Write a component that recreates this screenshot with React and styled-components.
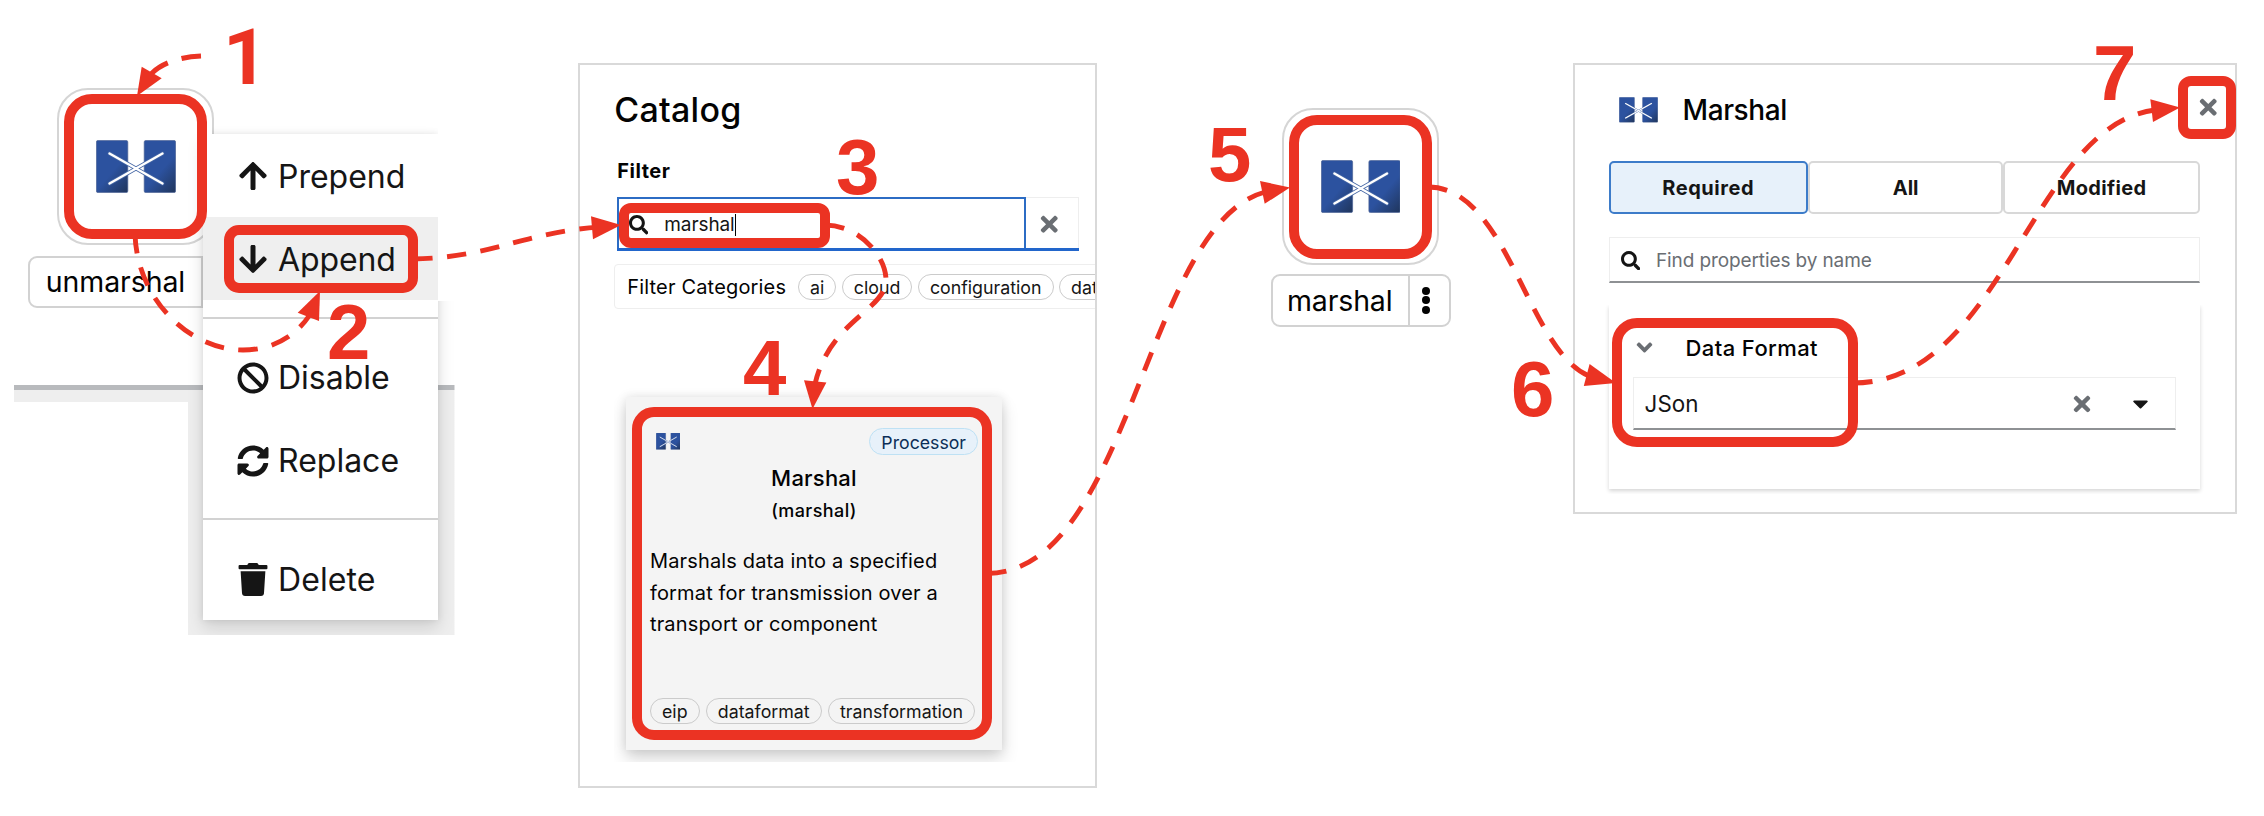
import React from 'react';
import styled, { createGlobalStyle } from 'styled-components';
import {
  FaArrowUp,
  FaArrowDown,
  FaBan,
  FaSyncAlt,
  FaTrash,
  FaTimes,
  FaSearch,
  FaCaretDown,
  FaAngleDown,
} from 'react-icons/fa';

const RED = '#eb3323';

const GlobalStyle = createGlobalStyle`
  * { box-sizing: border-box; }
  body {
    margin: 0;
    background: #fff;
    color: #030303;
    font-family: Inter, "Liberation Sans", sans-serif;
  }
`;

const Page = styled.main`
  position: relative;
  display: flex;
  align-items: flex-start;
  width: 2264px;
  height: 816px;
  overflow: hidden;
`;

/* ---------- Canvas with nodes ---------- */

const Canvas = styled.section`
  position: relative;
  flex: none;
  width: ${(p) => p.$width}px;
  height: 816px;
`;

const Floor = styled.div`
  position: absolute;
  left: 14px;
  top: 385px;
  width: 175px;
  height: 17px;
  background: linear-gradient(#b8babd 4.7px, #eee 4.7px);
`;

const NodeTile = styled.div`
  position: absolute;
  left: ${(p) => p.$x}px;
  top: ${(p) => p.$y}px;
  width: 156.5px;
  height: 157px;
  display: flex;
  align-items: center;
  justify-content: center;
  background: #fff;
  border: 2px solid #d5d5d5;
  border-radius: 31px;
`;

const NodeLabel = styled.div`
  position: absolute;
  left: ${(p) => p.$x}px;
  top: ${(p) => p.$y}px;
  display: flex;
  height: 52.5px;
  border: 2px solid #d2d2d2;
  border-radius: 9px;
  background: #fff;
`;

const NodeName = styled.span`
  display: flex;
  align-items: center;
  width: ${(p) => p.$width}px;
  padding-left: ${(p) => p.$pad}px;
  border-right: 2px solid #d2d2d2;
  font-size: 28.5px;
  letter-spacing: ${(p) => p.$spacing}px;
  color: #030303;
`;

const Kebab = styled.span`
  display: flex;
  flex-direction: column;
  align-items: center;
  justify-content: center;
  gap: 1.4px;
  width: 38.5px;
  padding-right: 6px;
`;

const KebabDot = styled.i`
  width: 8px;
  height: 8px;
  border-radius: 50%;
  background: #030303;
`;

/* ---------- Context menu ---------- */

const MenuLayer = styled.div`
  position: absolute;
  left: 188px;
  top: 126px;
  width: 266.5px;
  height: 509px;
  padding: 8px 16.5px 15px 15px;
  background: linear-gradient(transparent 259px, #b8babd 259px 263.7px, #eee 263.7px);
  clip-path: polygon(0 8px, 24px 8px, 24px 0, 250px 0, 250px 175px, 100% 175px, 100% 100%, 0 100%);
`;

const Menu = styled.div`
  width: 235px;
  height: 486px;
  background: #fff;
  box-shadow: 0 8px 16px rgba(3, 3, 3, 0.13), 0 0 7px rgba(3, 3, 3, 0.09);
`;

const MenuItem = styled.div`
  display: flex;
  align-items: center;
  height: 83px;
  padding: 1px 0 0 34px;
  gap: 9px;
  font-size: 32px;
  letter-spacing: ${(p) => p.$spacing || 0}px;
  color: #151515;
  background: ${(p) => (p.$active ? '#efefef' : 'transparent')};
`;

const MenuIcon = styled.span`
  display: flex;
  justify-content: center;
  width: 32px;
`;

const MenuRule = styled.hr`
  height: 2px;
  margin: 16.5px 0 17px;
  border: 0;
  background: #d2d2d2;
`;

/* ---------- Shared pieces ---------- */

const Panel = styled.section`
  flex: none;
  width: ${(p) => p.$width}px;
  height: ${(p) => p.$height}px;
  margin-top: 63px;
  padding: ${(p) => p.$padding};
  overflow: hidden;
  border: 2px solid #d9d9d9;
  background: #fff;
`;

const Chip = styled.span`
  flex: none;
  display: inline-flex;
  align-items: center;
  justify-content: center;
  height: 26.5px;
  padding: 1px 11px 0;
  border: 1.5px solid ${(p) => (p.$blue ? '#bee1f4' : '#cbcbcb')};
  border-radius: 14px;
  background: ${(p) => (p.$blue ? '#e7f1fa' : 'transparent')};
  color: ${(p) => (p.$blue ? '#0b2e57' : '#151515')};
  font-size: ${(p) => (p.$blue ? 17.7 : 17.8)}px;
  white-space: nowrap;
`;

/* ---------- Catalog ---------- */

const CatalogTitle = styled.h1`
  margin: 0;
  height: 40px;
  font-size: 34px;
  line-height: 42px;
  font-weight: 500;
  letter-spacing: 0.25px;
`;

const FieldLabel = styled.label`
  display: block;
  margin: 26.3px 0 11.7px 3px;
  font-size: 20px;
  line-height: 30px;
  font-weight: 700;
  letter-spacing: 0.5px;
`;

const FilterRow = styled.div`
  display: flex;
  width: 462px;
  height: 53.4px;
  margin-left: 3px;
  border-bottom: 3px solid #2266cb;
`;

const FilterInput = styled.div`
  display: flex;
  align-items: center;
  width: 409px;
  padding: 3px 0 0 9.5px;
  gap: 16px;
  border: 2px solid #2c6cc4;
  border-bottom: 0;
  color: #151515;
  font-size: 19px;
  letter-spacing: -0.1px;
`;

const Caret = styled.i`
  width: 1.5px;
  height: 22px;
  margin-left: -16px;
  background: #030303;
`;

const ClearButton = styled.div`
  display: flex;
  flex: 1;
  align-items: center;
  justify-content: center;
  padding: 2px 6px 0 0;
  border: 1px solid #eee;
  border-width: 1px 1px 0 0;
  color: #6a6e73;
`;

const CategoryBar = styled.div`
  display: flex;
  align-items: center;
  width: 560px;
  height: 45px;
  margin-top: 13.6px;
  padding-left: 12px;
  gap: 5.6px;
  border: 1.3px solid #eee;
  border-radius: 4px;
`;

const CategoryTitle = styled.span`
  width: 165px;
  font-size: 20px;
  letter-spacing: 0.17px;
  white-space: nowrap;
`;

const CardArea = styled.div`
  width: 408px;
  height: 377px;
  margin-top: 75.7px;
  padding: 12px 0 0 11.7px;
  overflow: hidden;
`;

const Card = styled.article`
  display: flex;
  flex-direction: column;
  width: 376px;
  height: 353px;
  padding: 31.3px 24px 25.7px;
  background: #f4f4f4;
  box-shadow: 0 9px 16px rgba(3, 3, 3, 0.16), 0 0 10px rgba(3, 3, 3, 0.1);
`;

const CardHeader = styled.header`
  display: flex;
  align-items: center;
  justify-content: space-between;
  height: 26.5px;
  padding-left: 6px;
`;

const CardTitle = styled.h2`
  margin: 10.5px 0 0;
  font-size: 22px;
  line-height: 26px;
  font-weight: 500;
  letter-spacing: 0.22px;
  text-align: center;
`;

const CardSubtitle = styled.div`
  margin-top: 8px;
  font-size: 18px;
  line-height: 24px;
  font-weight: 500;
  letter-spacing: 0.4px;
  text-align: center;
`;

const CardText = styled.p`
  width: 300px;
  margin: 23px 0 0;
  font-size: 20px;
  line-height: 31.3px;
  letter-spacing: 0.15px;
  white-space: nowrap;
`;

const CardTags = styled.footer`
  display: flex;
  gap: 6.3px;
  margin-top: auto;
`;

/* ---------- Properties ---------- */

const PropsHeader = styled.header`
  display: flex;
  align-items: center;
  height: 53px;
  margin-right: -20px;
  padding-left: 10px;
`;

const PropsTitle = styled.h2`
  flex: 1;
  margin: 0 0 0 25px;
  font-size: 28px;
  font-weight: 500;
  letter-spacing: -0.4px;
`;

const CloseIcon = styled.span`
  display: flex;
  margin-top: -6px;
  color: #6a6e73;
`;

const Tabs = styled.div`
  display: flex;
  height: 53px;
  margin-top: 25px;
`;

const Tab = styled.div`
  display: flex;
  flex: ${(p) => p.$grow || 1};
  align-items: center;
  justify-content: center;
  padding-top: 1px;
  border: ${(p) => (p.$active ? '2px solid #3d7cc9' : '2px solid #d8d8d8')};
  border-radius: 5px;
  background: ${(p) => (p.$active ? '#e7f1fa' : '#fff')};
  color: #151515;
  font-size: 20px;
  font-weight: 700;
  letter-spacing: ${(p) => p.$spacing}px;
`;

const PropSearch = styled.div`
  display: flex;
  align-items: center;
  height: 46.5px;
  margin-top: 22.4px;
  padding: 2px 0 0 11px;
  gap: 16px;
  border: 1px solid #eee;
  border-bottom: 2px solid #8e9194;
  color: #151515;
`;

const Placeholder = styled.span`
  color: #6a6e73;
  font-size: 19px;
  letter-spacing: -0.11px;
`;

const GroupArea = styled.div`
  margin: 22px -4px 0;
  padding: 0 4px 5px;
  overflow: hidden;
`;

const Group = styled.div`
  height: 184px;
  padding: 27.5px 24px 0;
  background: #fff;
  box-shadow: 0 2px 4px rgba(3, 3, 3, 0.17);
`;

const GroupTitle = styled.div`
  display: flex;
  align-items: center;
  height: 30px;
  margin-left: -1px;
  gap: 29px;
  font-size: 22px;
  font-weight: 500;
  letter-spacing: 0.4px;
`;

const GroupIcon = styled.span`
  display: flex;
  color: #6a6e73;
`;

const Select = styled.div`
  display: flex;
  align-items: center;
  height: 53px;
  margin-top: 14px;
  padding: 2px 22px 0 11px;
  border: 1px solid #eee;
  border-bottom: 2px solid #8e9194;
  color: #151515;
`;

const SelectValue = styled.span`
  flex: 1;
  font-size: 22.4px;
  letter-spacing: 0.1px;
`;

const SelectClear = styled.span`
  display: flex;
  margin-right: 34.5px;
  color: #6a6e73;
`;

/* ---------- Walkthrough annotations ---------- */

const Highlight = styled.div`
  position: absolute;
  left: ${(p) => p.$x}px;
  top: ${(p) => p.$y}px;
  width: ${(p) => p.$w}px;
  height: ${(p) => p.$h}px;
  border: 10px solid ${RED};
  border-radius: ${(p) => p.$r}px;
`;

const Step = styled.div`
  position: absolute;
  left: ${(p) => p.$x}px;
  top: ${(p) => p.$baseline - 66}px;
  color: ${RED};
  font: bold 78px/78px ${(p) => p.$face || '"Liberation Sans"'}, Arial, sans-serif;
`;

const Arrows = styled.svg`
  position: absolute;
  left: 0;
  top: 0;
`;

function MarshalIcon({ width, height, id }) {
  return (
    <svg width={width} height={height} viewBox="0 0 80 53" preserveAspectRatio="none">
      <defs>
        <linearGradient id={id} x1="0.2" y1="0" x2="0.9" y2="1">
          <stop offset="0" stopColor="#2c529f" />
          <stop offset="0.55" stopColor="#2c529f" />
          <stop offset="1" stopColor="#213862" />
        </linearGradient>
      </defs>
      <rect x="0.4" y="0.4" width="31.4" height="52.2" rx="1.6" fill={`url(#${id})`} stroke="#4a6294" strokeWidth="0.7" />
      <rect x="48.2" y="0.4" width="31.4" height="52.2" rx="1.6" fill={`url(#${id})`} stroke="#4a6294" strokeWidth="0.7" />
      <g strokeLinecap="round">
        <path d="M13.5 13.5 66.5 43.5M66.5 13.5 13.5 43.5" stroke="#4466a5" strokeWidth="3.8" />
        <path d="M13.5 13.5 66.5 43.5M66.5 13.5 13.5 43.5" stroke="#fff" strokeWidth="2.4" />
      </g>
    </svg>
  );
}

const arrows = [
  { d: 'M201 56C178 57 160 64 150 75', head: '137,96 141.7,66.7 161.7,78.3' },
  { d: 'M135 234C137 300 190 350 243 350C275 350 297 334 309 316', head: '320,291 297.7,312.7 319,321' },
  { d: 'M413 259C490 258 525 232 600 227', head: '621,225 591,216.3 593,239.3' },
  { d: 'M825 225C858 225 886 255 886 280C886 310 830 320 815 384', head: '812.5,409 804,380.2 826.4,382.6' },
  { d: 'M987 573.5C1130 573 1145 225 1265 192', head: '1290,187.5 1260,181 1264.7,203.8' },
  { d: 'M1428 187C1508 187 1527 350 1589 376', head: '1616,383 1589.6,364 1583.8,386' },
  { d: 'M1853 383C2003 383 2032 125 2155 110', head: '2180,107.5 2150.3,99.3 2153,122' },
];

const highlights = [
  [63.5, 94, 143.5, 145, 28],
  [224, 224.5, 194, 68.5, 15],
  [618.7, 202.7, 211, 45, 12],
  [632, 407.3, 359.8, 332.4, 22],
  [1288.7, 114.7, 143.6, 144.6, 28],
  [1612, 318, 246, 129, 25],
  [2178, 76, 57.8, 63, 13],
];

const steps = [
  [223, 84.5, 'Roboto'],
  [327, 359],
  [836, 194],
  [743, 394.7],
  [1208, 181],
  [1511, 416],
  [2093, 100],
];

export default function App() {
  return (
    <Page>
      <GlobalStyle />

      <Canvas $width={578}>
        <Floor />
        <NodeTile $x={57.3} $y={87.5}>
          <MarshalIcon id="mi-a" width={80} height={53} />
        </NodeTile>
        <NodeLabel $x={28.3} $y={255.5}>
          <NodeName $width={172.5} $pad={15.5} $spacing={-0.1}>unmarshal</NodeName>
          <Kebab />
        </NodeLabel>
        <MenuLayer>
          <Menu>
            <MenuItem>
              <MenuIcon><FaArrowUp size={32} /></MenuIcon>Prepend
            </MenuItem>
            <MenuItem $active $spacing={-0.1}>
              <MenuIcon><FaArrowDown size={32} /></MenuIcon>Append
            </MenuItem>
            <MenuRule />
            <MenuItem>
              <MenuIcon><FaBan size={32} /></MenuIcon>Disable
            </MenuItem>
            <MenuItem>
              <MenuIcon><FaSyncAlt size={32} /></MenuIcon>Replace
            </MenuItem>
            <MenuRule />
            <MenuItem $spacing={0.1}>
              <MenuIcon><FaTrash size={33} /></MenuIcon>Delete
            </MenuItem>
          </Menu>
        </MenuLayer>
      </Canvas>

      <Panel $width={519} $height={724.7} $padding="24.3px 0 0 34.3px">
        <CatalogTitle>Catalog</CatalogTitle>
        <FieldLabel>Filter</FieldLabel>
        <FilterRow>
          <FilterInput>
            <FaSearch size={19.5} />
            marshal
            <Caret />
          </FilterInput>
          <ClearButton><FaTimes size={24.5} /></ClearButton>
        </FilterRow>
        <CategoryBar>
          <CategoryTitle>Filter Categories</CategoryTitle>
          <Chip>ai</Chip>
          <Chip>cloud</Chip>
          <Chip>configuration</Chip>
          <Chip>database</Chip>
        </CategoryBar>
        <CardArea>
          <Card>
            <CardHeader>
              <MarshalIcon id="mi-b" width={24.5} height={16.5} />
              <Chip $blue>Processor</Chip>
            </CardHeader>
            <CardTitle>Marshal</CardTitle>
            <CardSubtitle>(marshal)</CardSubtitle>
            <CardText>
              Marshals data into a specified
              <br />
              format for transmission over a
              <br />
              transport or component
            </CardText>
            <CardTags>
              <Chip>eip</Chip>
              <Chip>dataformat</Chip>
              <Chip>transformation</Chip>
            </CardTags>
          </Card>
        </CardArea>
      </Panel>

      <Canvas $width={476}>
        <NodeTile $x={185} $y={107.5}>
          <MarshalIcon id="mi-c" width={79.5} height={53} />
        </NodeTile>
        <NodeLabel $x={173.5} $y={274}>
          <NodeName $width={137.5} $pad={14.5} $spacing={-0.15}>marshal</NodeName>
          <Kebab>
            <KebabDot />
            <KebabDot />
            <KebabDot />
          </Kebab>
        </NodeLabel>
      </Canvas>

      <Panel $width={664} $height={451} $padding="18.3px 35px 0 33.5px">
        <PropsHeader>
          <MarshalIcon id="mi-d" width={39} height={25.5} />
          <PropsTitle>Marshal</PropsTitle>
          <CloseIcon><FaTimes size={24.5} /></CloseIcon>
        </PropsHeader>
        <Tabs>
          <Tab $active $grow={1.022} $spacing={0.55}>Required</Tab>
          <Tab $spacing={-0.1}>All</Tab>
          <Tab $grow={1.008} $spacing={0.37}>Modified</Tab>
        </Tabs>
        <PropSearch>
          <FaSearch size={19.5} />
          <Placeholder>Find properties by name</Placeholder>
        </PropSearch>
        <GroupArea>
          <Group>
            <GroupTitle>
              <GroupIcon><FaAngleDown size={25} /></GroupIcon>
              Data Format
            </GroupTitle>
            <Select>
              <SelectValue>JSon</SelectValue>
              <SelectClear><FaTimes size={24} /></SelectClear>
              <FaCaretDown size={25} />
            </Select>
          </Group>
        </GroupArea>
      </Panel>

      <Arrows width="2264" height="816" viewBox="0 0 2264 816">
        {arrows.map((a) => (
          <g key={a.d}>
            <path d={a.d} fill="none" stroke={RED} strokeWidth="4.9" strokeDasharray="19.5 14.4" />
            <polygon points={a.head} fill={RED} />
          </g>
        ))}
      </Arrows>
      {highlights.map(([x, y, w, h, r]) => (
        <Highlight key={`${x}-${y}`} $x={x} $y={y} $w={w} $h={h} $r={r} />
      ))}
      {steps.map(([x, baseline, face], i) => (
        <Step key={x} $x={x} $baseline={baseline} $face={face}>{i + 1}</Step>
      ))}
    </Page>
  );
}
